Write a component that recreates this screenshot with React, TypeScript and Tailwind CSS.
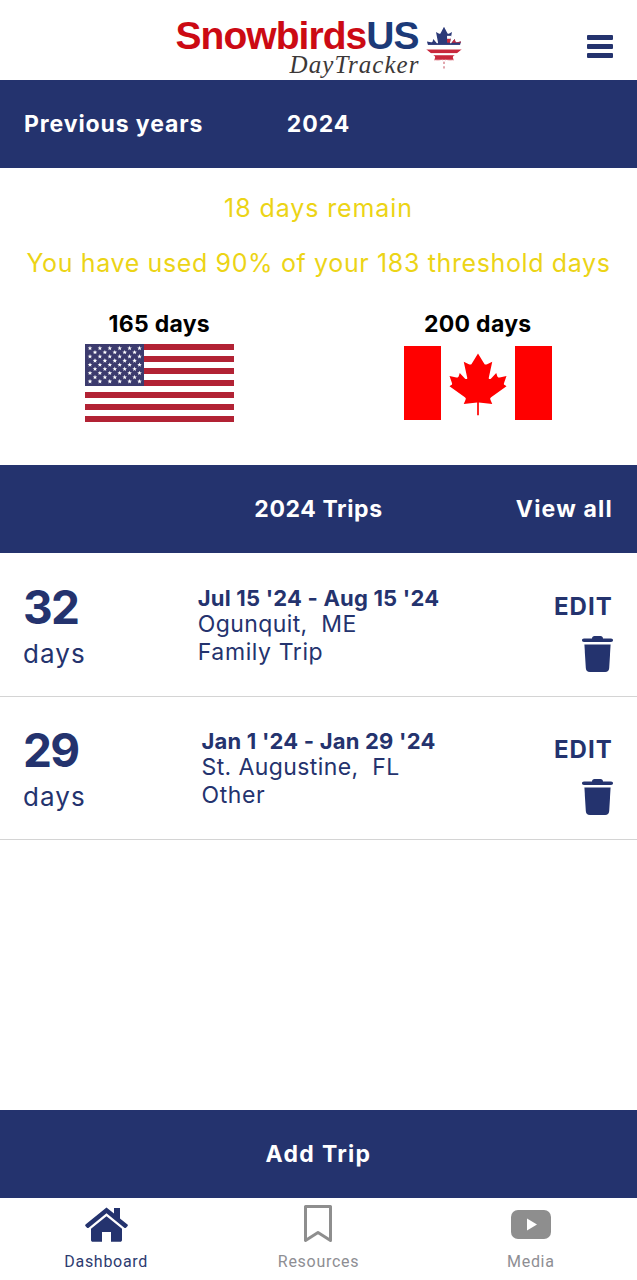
import React from 'react';

const font = "font-['Inter','Open_Sans',sans-serif]";

const leafPath =
  'M50 4 L41 21 C40 23 38 23 36 22 L29 18 L34 44 C35 48 32 49 30 46 L22 36 L20 43 C19 45 18 45 16 45 L5 43 L9 56 C10 59 9 60 7 61 L3 63 L25 81 C27 83 27 84 26 87 L24 94 L47 91 L46 118 L54 118 L53 91 L76 94 L74 87 C73 84 73 83 75 81 L97 63 L93 61 C91 60 90 59 91 56 L95 43 L84 45 C82 45 81 45 80 43 L78 36 L70 46 C68 49 65 48 66 44 L71 18 L64 22 C62 23 60 23 59 21 Z';

const Logo: React.FC = () => (
  <div className="flex items-start ml-[1px]">
    <div className="flex flex-col items-end">
      <div className="font-['Liberation_Sans',sans-serif] font-bold text-[39px] leading-[34px] tracking-[-0.95px] h-[34px] mt-[19px]">
        <span className="text-[#cc0a14]">Snowbirds</span>
        <span className="text-[#1c3a78]">US</span>
      </div>
      <div className="font-['Liberation_Serif',serif] italic text-[#3c3838] text-[25px] leading-[24px] mr-[-1px] tracking-[1.05px]">
        DayTracker
      </div>
    </div>
    <svg width="38" height="46" viewBox="0 0 100 120" className="ml-[6px] mt-[25px]">
      <clipPath id="leaf-shape">
        <path d={leafPath} />
      </clipPath>
      <g clipPath="url(#leaf-shape)">
        <rect x="0" y="0" width="100" height="52" fill="#2c3a78" />
        <rect x="58" y="28" width="42" height="8" fill="#fff" />
        <rect x="58" y="36" width="42" height="10" fill="#c8283c" />
        <rect x="0" y="52" width="100" height="12" fill="#fff" />
        <rect x="0" y="64" width="100" height="10" fill="#c8283c" />
        <rect x="0" y="74" width="100" height="5" fill="#fff" />
        <rect x="0" y="79" width="100" height="15" fill="#c8283c" />
        <rect x="0" y="91" width="100" height="30" fill="#fff" />
      </g>
      <rect x="48" y="96" width="4" height="6" fill="#d88a94" />
      <rect x="48" y="108" width="4" height="6" fill="#d88a94" />
    </svg>
  </div>
);

const starPath = 'M0 -2.4 L0.6 -0.8 L2.3 -0.7 L1 0.3 L1.4 2 L0 1 L-1.4 2 L-1 0.3 L-2.3 -0.7 L-0.6 -0.8 Z';

const UsFlag: React.FC = () => {
  const stripes = [0, 1, 2, 3, 4, 5, 6];
  const stars: [number, number][] = [];
  for (let r = 0; r < 9; r++) {
    const n = r % 2 === 0 ? 6 : 5;
    for (let c = 0; c < n; c++) {
      stars.push([(r % 2 === 0 ? 5 : 10) + c * 9.9, 4.2 + r * 4.15]);
    }
  }
  return (
    <svg width="149" height="78" viewBox="0 0 149 78" className="block">
      {stripes.map((i) => (
        <rect key={i} x="0" y={i * 12} width="149" height="6" fill="#b22234" />
      ))}
      <rect x="0" y="0" width="59" height="42" fill="#3c3b6e" />
      {stars.map(([x, y], i) => (
        <path key={i} d={starPath} transform={`translate(${x} ${y})`} fill="#fff" />
      ))}
    </svg>
  );
};

const CanadaFlag: React.FC = () => (
  <svg width="148" height="74" viewBox="0 0 148 74" className="block">
    <rect x="0" y="0" width="37" height="74" fill="#ff0000" />
    <rect x="111" y="0" width="37" height="74" fill="#ff0000" />
    <g transform="translate(45.5 7.5) scale(0.57 0.51)">
      <path
        fill="#ff0000"
        d="M50 0 L39 20 C38 22 36 22 34 21 L25 16 L31 47 C32 50 29 51 27 49 L18 38 L16 45 C15 47 14 47 12 47 L0 44 L4 57 C5 60 5 61 3 62 L0 64 L27 86 C29 88 29 89 28 91 L25 99 L48.5 96 L48.5 121 L51.5 121 L51.5 96 L75 99 L72 91 C71 89 71 88 73 86 L100 64 L97 62 C95 61 95 60 96 57 L100 44 L88 47 C86 47 85 47 84 45 L82 38 L73 49 C71 51 68 50 69 47 L75 16 L66 21 C64 22 62 22 61 20 Z"
      />
    </g>
  </svg>
);

const TrashIcon: React.FC = () => (
  <svg width="31" height="36" viewBox="0 0 31 36" className="block">
    <path
      fill="#24336e"
      d="M10 2.5 C10 1 11 0 12.5 0 H18.5 C20 0 21 1 21 2.5 H29 C30.3 2.5 31 3.3 31 4.3 C31 5.3 30.3 6 29 6 H2 C0.7 6 0 5.3 0 4.3 C0 3.3 0.7 2.5 2 2.5 Z"
    />
    <path
      fill="#24336e"
      d="M2.4 8.5 H28.6 L27.2 32 C27 34.5 25.6 36 23.2 36 H7.8 C5.4 36 4 34.5 3.8 32 Z"
    />
  </svg>
);

const HomeIcon: React.FC = () => (
  <svg width="43" height="35" viewBox="0 0 43 35" className="block">
    <path
      fill="#24336e"
      d="M21.5 0.5 L29 6.6 V1 H35 V11.5 L42.5 17.6 C43 18 43 18.6 42.6 19 L41 20.8 C40.6 21.2 40 21.2 39.6 20.9 L21.5 6.2 L3.4 20.9 C3 21.2 2.4 21.2 2 20.8 L0.4 19 C0 18.6 0 18 0.5 17.6 Z"
    />
    <path
      fill="#24336e"
      d="M21.5 9.2 L37 21.8 V33 C37 34 36.2 34.8 35.2 34.8 H26 V25 H17 V34.8 H7.8 C6.8 34.8 6 34 6 33 V21.8 Z"
    />
  </svg>
);

const BookmarkIcon: React.FC = () => (
  <svg width="28" height="38" viewBox="0 0 28 38" className="block">
    <path
      fill="none"
      stroke="#8e8e8e"
      strokeWidth="3"
      strokeLinejoin="round"
      d="M1.5 1.5 H26.5 V35.5 L14 27.5 L1.5 35.5 Z"
    />
  </svg>
);

const MediaIcon: React.FC = () => (
  <svg width="40" height="29" viewBox="0 0 40 29" className="block">
    <rect x="0" y="0" width="40" height="29" rx="7" fill="#8e8e8e" />
    <path d="M16 8.5 L26 14.5 L16 20.5 Z" fill="#fff" />
  </svg>
);

interface Trip {
  days: number;
  dates: string;
  place: string;
  kind: string;
}

const trips: Trip[] = [
  { days: 32, dates: "Jul 15 '24 - Aug 15 '24", place: 'Ogunquit,  ME', kind: 'Family Trip' },
  { days: 29, dates: "Jan 1 '24 - Jan 29 '24", place: 'St. Augustine,  FL', kind: 'Other' },
];

const TripRow: React.FC<{ trip: Trip }> = ({ trip }) => (
  <div className="grid grid-cols-[1fr_auto_1fr] h-[143px] px-6 border-b border-[#d4d4d4] text-[#24336e]">
    <div className="pt-[26px]">
      <div className="font-bold text-[46px] leading-[54px] tracking-[-1.6px] ml-[-1px]">{trip.days}</div>
      <div className="text-[26px] leading-[32px] mt-[4px] tracking-[1.1px] ml-[-1px]">days</div>
    </div>
    <div className="pt-[30px]">
      <div className="font-bold text-[22px] leading-[29px] tracking-[0.2px]">{trip.dates}</div>
      <div className="text-[23px] leading-[27px] whitespace-pre tracking-[0.4px] mt-[-2px]">{trip.place}</div>
      <div className="text-[23px] leading-[27px] tracking-[0.6px] mt-[1px]">{trip.kind}</div>
    </div>
    <div className="flex flex-col items-end pt-[38px]">
      <div className="font-bold text-[24px] leading-[30px] tracking-[1.1px]">EDIT</div>
      <div className="mt-[14px]">
        <TrashIcon />
      </div>
    </div>
  </div>
);

const TabItem: React.FC<{ label: string; active?: boolean; children: React.ReactNode }> = ({
  label,
  active,
  children,
}) => (
  <div className="flex flex-col items-center">
    <div className="h-[46px] flex items-center">{children}</div>
    <div
      className={`font-['Roboto',sans-serif] text-[16px] leading-[20px] tracking-[0.7px] mt-[5px] ${
        active ? 'text-[#2d3b70]' : 'text-[#8e8e93]'
      }`}
    >
      {label}
    </div>
  </div>
);

const App: React.FC = () => {
  return (
    <div className={`flex flex-col h-[1280px] w-[637px] bg-white overflow-hidden ${font}`}>
      <header className="relative flex justify-center h-[80px] shrink-0">
        <Logo />
        <div className="absolute right-[24px] top-[35px] flex flex-col gap-[4px]">
          <div className="w-[26px] h-[5px] rounded-[1px] bg-[#24336e]" />
          <div className="w-[26px] h-[5px] rounded-[1px] bg-[#24336e]" />
          <div className="w-[26px] h-[5px] rounded-[1px] bg-[#24336e]" />
        </div>
      </header>

      <div className="grid grid-cols-[1fr_auto_1fr] items-center h-[88px] px-6 bg-[#24336e] text-white font-bold text-[23px] tracking-[0.9px] shrink-0">
        <div>Previous years</div>
        <div>2024</div>
        <div />
      </div>

      <section className="h-[297px] shrink-0 flex flex-col items-center text-[#ecd416] text-[25px]">
        <div className="mt-[24px] leading-[32px] tracking-[0.9px]">18 days remain</div>
        <div className="mt-[23px] leading-[32px] whitespace-nowrap tracking-[0.63px]">
          You have used 90% of your 183 threshold days
        </div>
        <div className="grid grid-cols-2 w-full mt-[31px] text-black font-bold text-[23px] tracking-[0.3px]">
          <div className="flex flex-col items-center">
            <div className="leading-[28px] mb-[6px]">165 days</div>
            <UsFlag />
          </div>
          <div className="flex flex-col items-center">
            <div className="leading-[28px] mb-[8px]">200 days</div>
            <CanadaFlag />
          </div>
        </div>
      </section>

      <div className="grid grid-cols-[1fr_auto_1fr] items-center h-[88px] px-6 bg-[#24336e] text-white font-bold text-[23px] tracking-[0.6px] shrink-0">
        <div />
        <div>2024 Trips</div>
        <div className="text-right tracking-[1.2px]">View all</div>
      </div>

      <div className="flex-1 pt-[1px]">
        {trips.map((trip) => (
          <TripRow key={trip.days} trip={trip} />
        ))}
      </div>

      <div className="flex items-center justify-center h-[88px] bg-[#24336e] text-white font-bold text-[23px] tracking-[1.3px] shrink-0">
        Add Trip
      </div>

      <nav className="grid grid-cols-3 h-[82px] pt-[3px] shrink-0">
        <TabItem label="Dashboard" active>
          <HomeIcon />
        </TabItem>
        <TabItem label="Resources">
          <BookmarkIcon />
        </TabItem>
        <TabItem label="Media">
          <MediaIcon />
        </TabItem>
      </nav>
    </div>
  );
};

export default App;
